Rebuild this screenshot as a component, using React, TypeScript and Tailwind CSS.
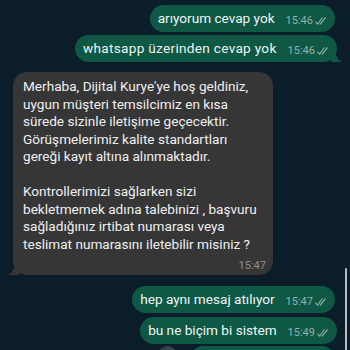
import React from 'react';

const Checks = () => (
  <svg width="12" height="8" viewBox="0 0 12 8" fill="none" stroke="currentColor" strokeWidth="1.1" strokeLinecap="round" strokeLinejoin="round">
    <path d="M0.8 5.2 L2.6 7.2 L7.2 0.8" />
    <path d="M5.2 7.2 L10.2 0.8" />
  </svg>
);

const Outgoing: React.FC<{ text: string; time: string; tail?: boolean; className?: string; textClass?: string }> = ({ text, time, tail, className, textClass }) => (
  <div className={`relative flex items-end bg-[#0f5846] rounded-[14px] pl-[8px] pr-[8px] h-[27px] ${className ?? ''}`}>
    <span className={`text-[13.6px] leading-[27px] text-[#eef5f2] whitespace-nowrap ${textClass ?? ''}`}>{text}</span>
    <span className="ml-[11px] mb-[5px] flex items-center gap-[2px] text-[11px] leading-[12px] text-[#8fb3a8]">
      {time}
      <Checks />
    </span>
    {tail && (
      <svg className="absolute right-[-6px] bottom-0" width="12" height="12" viewBox="0 0 12 12">
        <path d="M0 0 L0 12 L12 12 C7 11 5 7 4 0 Z" fill="#0f5846" />
      </svg>
    )}
  </div>
);

const lines = [
  "Merhaba, Dijital Kurye'ye hoş geldiniz,",
  'uygun müşteri temsilcimiz en kısa',
  'sürede sizinle iletişime geçecektir.',
  'Görüşmelerimiz kalite standartları',
  'gereği kayıt altına alınmaktadır.',
  '',
  'Kontrollerimizi sağlarken sizi',
  'bekletmemek adına talebinizi , başvuru',
  'sağladığınız irtibat numarası veya',
  'teslimat numarasını iletebilir misiniz ?',
];

export default function App() {
  return (
    <div className="relative w-[350px] h-[350px] overflow-hidden bg-[#0b1d29] font-['Roboto',sans-serif]">
      <div className="flex flex-col pt-[5px]">
        <div className="flex flex-col items-end gap-[3px] pr-[15px]">
          <Outgoing text="arıyorum cevap yok" time="15:46" />
          <Outgoing text="whatsapp üzerinden cevap yok" time="15:46" tail className="mr-[-2px]" textClass="tracking-[0.3px]" />
        </div>

        <div className="relative ml-[13px] mt-[10px] w-[260px] bg-[#363637] rounded-[14px] pl-[10px] pr-[7px] pt-[6px] pb-[2px]">
          <div className="text-[13.6px] leading-[17.5px] text-[#f0f0f0]">
            {lines.map((l, i) => (
              <div key={i} className="whitespace-nowrap h-[17.5px]">{l}</div>
            ))}
          </div>
          <div className="flex justify-end mt-[6px] text-[11px] leading-[14px] text-[#8e8e90]">15:47</div>
          <svg className="absolute left-[-6px] bottom-0" width="12" height="12" viewBox="0 0 12 12">
            <path d="M12 0 L12 12 L0 12 C5 11 7 7 8 0 Z" fill="#363637" />
          </svg>
        </div>

        <div className="flex flex-col items-end gap-[4px] pr-[15px] mt-[11px]">
          <Outgoing text="hep aynı mesaj atılıyor" time="15:47" />
          <Outgoing text="bu ne biçim bi sistem" time="15:49" className="mr-[-2px]" />
          <div className="flex items-start gap-[13px] mt-[-2px]">
            <div className="w-[19px] h-[19px] rounded-full bg-[#3a4248]" />
            <div className="w-[145px] h-[27px] rounded-[14px] bg-[#0f5846]" />
          </div>
        </div>
      </div>
      <div className="absolute right-[3px] top-[268px] w-[2px] h-[90px] rounded-full bg-[#b8bcc0]" />
    </div>
  );
}
